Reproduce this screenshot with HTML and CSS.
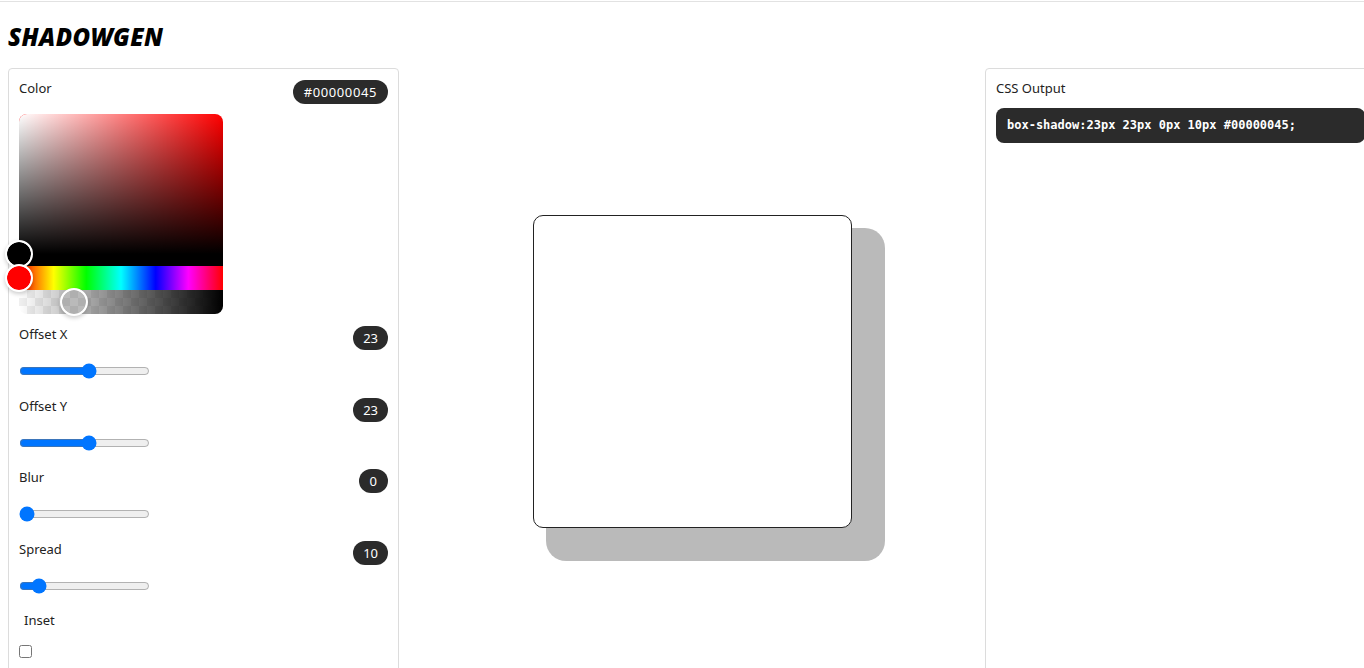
FILE: index.html
```html
<!DOCTYPE html>
<html lang="en">
<head>
<meta charset="utf-8">
<title>ShadowGen</title>
<link rel="stylesheet" href="styles.css">
</head>
<body>
<div class="topline"></div>
<div class="app">
  <h1 class="title">SHADOWGEN</h1>
  <div class="layout">
    <section class="panel controls">
      <div class="row-head">
        <span class="label">Color</span>
        <span class="badge badge-hex">#00000045</span>
      </div>
      <div class="picker">
        <div class="saturation">
          <div class="pointer sat-pointer"><span class="fill fill-black"></span></div>
        </div>
        <div class="hue">
          <div class="pointer hue-pointer"><span class="fill fill-red"></span></div>
        </div>
        <div class="alpha">
          <div class="alpha-grad"></div>
          <div class="pointer alpha-pointer" style="left: 27%"><span class="fill fill-alpha"></span></div>
        </div>
      </div>

      <div class="control">
        <div class="row-head">
          <span class="label">Offset X</span>
          <span class="badge">23</span>
        </div>
        <input class="slider" type="range" min="-300" max="300" value="23">
      </div>
      <div class="control">
        <div class="row-head">
          <span class="label">Offset Y</span>
          <span class="badge">23</span>
        </div>
        <input class="slider" type="range" min="-300" max="300" value="23">
      </div>
      <div class="control">
        <div class="row-head">
          <span class="label">Blur</span>
          <span class="badge badge-zero">0</span>
        </div>
        <input class="slider" type="range" min="0" max="100" value="0">
      </div>
      <div class="control">
        <div class="row-head">
          <span class="label">Spread</span>
          <span class="badge">10</span>
        </div>
        <input class="slider" type="range" min="0" max="100" value="10">
      </div>
      <div class="inset">
        <span class="label inset-label">Inset</span>
        <input class="check" type="checkbox">
      </div>
    </section>

    <section class="stage">
      <div class="preview"></div>
    </section>

    <section class="panel output">
      <span class="label">CSS Output</span>
      <pre class="code">box-shadow:23px 23px 0px 10px #00000045;</pre>
    </section>
  </div>
</div>
</body>
</html>
```

FILE: styles.css
```css
html, body {
  margin: 0;
  padding: 0;
  overflow: hidden;
  background: #fff;
}

body {
  font-family: "Noto Sans", "Open Sans", sans-serif;
  color: #222;
}

.topline {
  height: 1px;
  margin-top: 1px;
  background: #e2e2e2;
}

.app {
  padding: 0 8px;
}

.title {
  margin: 19px 0 15px;
  font-size: 24px;
  line-height: 32px;
  font-style: italic;
  font-weight: 900;
  letter-spacing: 0.4px;
  color: #000;
}

.layout {
  display: flex;
  width: 1368px;
}

.panel {
  box-sizing: border-box;
  width: 391px;
  flex: none;
  border: 1px solid #dcdcdc;
  border-radius: 4px;
  padding: 10px;
  min-height: 640px;
}

.label {
  font-size: 13px;
  line-height: 18px;
  color: #222;
}

.row-head {
  display: flex;
  justify-content: space-between;
  align-items: flex-start;
}

.badge {
  margin-top: 1px;
  height: 24px;
  line-height: 24px;
  padding: 0 10px;
  border-radius: 12px;
  background: #2b2b2b;
  color: #fff;
  font-size: 13px;
}

.badge-hex {
  padding: 0 11px;
  letter-spacing: 0.6px;
}

.badge-zero {
  padding: 0 11px;
}

/* colour picker */
.picker {
  position: relative;
  width: 204px;
  height: 200px;
  margin-top: 10px;
  display: flex;
  flex-direction: column;
}

.saturation {
  position: relative;
  flex: 1;
  border-bottom: 12px solid #000;
  border-radius: 8px 8px 0 0;
  background-color: #f00;
  background-image:
    linear-gradient(to top, #000, rgba(0, 0, 0, 0)),
    linear-gradient(to right, #fff, rgba(255, 255, 255, 0));
}

.hue {
  position: relative;
  height: 24px;
  background: linear-gradient(to right, #f00 0, #ff0 17%, #0f0 33%, #0ff 50%, #00f 67%, #f0f 83%, #f00 100%);
}

.alpha {
  position: relative;
  height: 24px;
  border-radius: 0 0 8px 8px;
  background-color: #fff;
  background-image:
    conic-gradient(rgba(0, 0, 0, 0.06) 0 25%, transparent 0 50%, rgba(0, 0, 0, 0.06) 0 75%, transparent 0);
  background-size: 16px 16px;
}

.alpha-grad {
  position: absolute;
  inset: 0;
  border-radius: inherit;
  background: linear-gradient(90deg, rgba(0, 0, 0, 0), #000);
}

.pointer {
  position: absolute;
  z-index: 2;
  box-sizing: border-box;
  width: 28px;
  height: 28px;
  border: 2px solid #fff;
  border-radius: 50%;
  transform: translate(-50%, -50%);
  box-shadow: 0 2px 4px rgba(0, 0, 0, 0.2);
  background-color: #fff;
  background-image:
    conic-gradient(rgba(0, 0, 0, 0.06) 0 25%, transparent 0 50%, rgba(0, 0, 0, 0.06) 0 75%, transparent 0);
  background-size: 16px 16px;
  overflow: hidden;
}

.fill {
  display: block;
  width: 100%;
  height: 100%;
  border-radius: 50%;
}

.fill-black { background: #000; }
.fill-red { background: #f00; }
.fill-alpha { background: rgba(0, 0, 0, 0.27); }

.sat-pointer { left: 0; top: 100%; }
.hue-pointer { left: 0; top: 50%; }
.alpha-pointer { top: 50%; }

/* sliders */
.control {
  margin-top: 11px;
}

.control + .control {
  margin-top: 17.5px;
}

.slider {
  display: block;
  width: 131px;
  height: 16px;
  margin: 13px 0 0;
}

.inset {
  margin-top: 17.5px;
}

.inset-label {
  display: block;
  padding-left: 5px;
}

.check {
  display: block;
  margin: 16px 0 0;
  width: 13px;
  height: 13px;
}

/* preview */
.stage {
  flex: none;
  width: 586px;
  display: flex;
  justify-content: center;
  align-items: flex-start;
  padding-top: 147px;
  box-sizing: border-box;
}

.preview {
  width: 317px;
  height: 311px;
  border: 1px solid #222;
  border-radius: 10px;
  background: #fff;
  box-shadow: 23px 23px 0px 10px #00000045;
}

/* output */
.output .label {
  display: block;
}

.code {
  margin: 11px 0 0;
  height: 35px;
  line-height: 35px;
  padding: 0 11px;
  border-radius: 8px;
  background: #2b2b2b;
  color: #fff;
  font-family: "DejaVu Sans Mono", "Liberation Mono", monospace;
  font-weight: bold;
  font-size: 12px;
}
```
